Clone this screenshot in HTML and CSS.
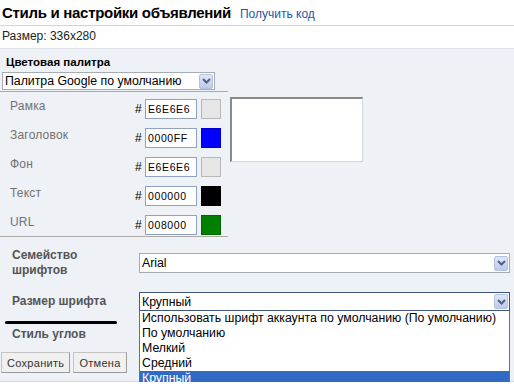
FILE: index.html
```html
<!DOCTYPE html>
<html lang="ru">
<head>
  <meta charset="UTF-8"/>
  <title>Стиль и настройки объявлений</title>
  <link rel="stylesheet" href="styles.css">
</head>
<body>

<div class="header">
  <h1>Стиль и настройки объявлений</h1>
  <a href="#" class="get-code">Получить код</a>
</div>
<div class="size-line">Размер: 336x280</div>

<div class="panel">
  <div class="palette">
    <div class="section-title">Цветовая палитра</div>
    <div class="select palette-select">
      <span>Палитра Google по умолчанию</span>
      <span class="arrow"><svg width="9" height="6" viewBox="0 0 9 6"><path d="M1 1 L4.5 4.5 L8 1" fill="none" stroke="#4d6185" stroke-width="2"/></svg></span>
    </div>
  </div>

  <div class="colors">
    <div class="color-rows">
      <div class="color-row">
        <span class="color-label">Рамка</span><span class="hash">#</span>
        <input class="hex" value="E6E6E6"><span class="swatch" style="background:#E6E6E6"></span>
      </div>
      <div class="color-row">
        <span class="color-label">Заголовок</span><span class="hash">#</span>
        <input class="hex" value="0000FF"><span class="swatch" style="background:#0000FF"></span>
      </div>
      <div class="color-row">
        <span class="color-label">Фон</span><span class="hash">#</span>
        <input class="hex" value="E6E6E6"><span class="swatch" style="background:#E6E6E6"></span>
      </div>
      <div class="color-row">
        <span class="color-label">Текст</span><span class="hash">#</span>
        <input class="hex" value="000000"><span class="swatch" style="background:#000000"></span>
      </div>
      <div class="color-row">
        <span class="color-label">URL</span><span class="hash">#</span>
        <input class="hex" value="008000"><span class="swatch" style="background:#008000"></span>
      </div>
    </div>
    <div class="preview"></div>
  </div>

  <div class="fonts">
    <div class="font-row family-row">
      <div class="font-label">Семейство<br>шрифтов</div>
      <div class="select">
        <span>Arial</span>
        <span class="arrow"><svg width="9" height="6" viewBox="0 0 9 6"><path d="M1 1 L4.5 4.5 L8 1" fill="none" stroke="#4d6185" stroke-width="2"/></svg></span>
      </div>
    </div>
    <div class="font-row size-row">
      <div class="font-label">Размер шрифта</div>
      <div class="select-wrap">
        <div class="select focused">
          <span>Крупный</span>
          <span class="arrow"><svg width="9" height="6" viewBox="0 0 9 6"><path d="M1 1 L4.5 4.5 L8 1" fill="none" stroke="#4d6185" stroke-width="2"/></svg></span>
        </div>
        <ul class="options">
          <li>Использовать шрифт аккаунта по умолчанию (По умолчанию)</li>
          <li>По умолчанию</li>
          <li>Мелкий</li>
          <li>Средний</li>
          <li class="selected">Крупный</li>
        </ul>
      </div>
    </div>
    <div class="marker"></div>
    <div class="font-row corner-row">
      <div class="font-label">Стиль углов</div>
    </div>
  </div>

  <div class="buttons">
    <button class="btn">Сохранить</button>
    <button class="btn">Отмена</button>
  </div>
</div>

</body>
</html>
```

FILE: styles.css
```css
html, body {
  overflow: hidden;
}

body {
  margin: 0;
  font-family: "Liberation Sans", Arial, sans-serif;
  font-size: 12px;
  color: #000;
  background-color: #fff;
}

.header {
  display: flex;
  align-items: baseline;
  gap: 9px;
  height: 25px;
  padding-left: 2px;
  border-bottom: 1px solid #d3d3d3;
}

h1 {
  margin: 0;
  font-size: 15px;
  line-height: 25px;
  font-weight: bold;
  letter-spacing: -0.3px;
}

.get-code {
  color: #2356a8;
  text-decoration: none;
  font-size: 12px;
}

.size-line {
  height: 22px;
  line-height: 21px;
  padding-left: 2px;
  color: #222;
  border-bottom: 1px solid #dde2e9;
}

.panel {
  background-color: #eef1f5;
  padding-bottom: 8px;
  border-bottom: 1px solid #d4d8de;
}

.palette {
  width: 228px;
  padding: 6px 0 1px 0;
  border-bottom: 1px solid #aaa;
}

.section-title {
  font-size: 11.5px;
  font-weight: bold;
  line-height: 14px;
  padding-left: 6px;
  margin-bottom: 3px;
}

.select {
  display: flex;
  align-items: center;
  justify-content: space-between;
  box-sizing: border-box;
  border: 1px solid #a5acb2;
  background-color: #fff;
  font-size: 12.3px;
  padding: 0 1px 0 2px;
}

.palette-select {
  margin-left: 2px;
  width: 213px;
  height: 18px;
}

.arrow {
  display: flex;
  align-items: center;
  justify-content: center;
  box-sizing: border-box;
  width: 14px;
  height: 15px;
  border: 1px solid #b4c2e0;
  border-radius: 2px;
  background: linear-gradient(#e0e7f7, #bccaea);
}

.colors {
  display: flex;
  align-items: flex-start;
}

.color-rows {
  width: 228px;
  box-sizing: border-box;
  padding: 7px 0 1px 10px;
  border-bottom: 1px solid #aaa;
  display: flex;
  flex-direction: column;
  gap: 9px;
}

.color-row {
  display: flex;
  align-items: flex-start;
  height: 20px;
}

.color-label {
  width: 125px;
  color: #727272;
  letter-spacing: 0.2px;
  line-height: 15px;
}

.hash {
  width: 10px;
  line-height: 21px;
}

.hex {
  width: 52px;
  height: 20px;
  box-sizing: border-box;
  margin: 0;
  border: 1px solid #8fa3bd;
  padding: 0 0 0 2px;
  font-family: "Liberation Sans", Arial, sans-serif;
  font-size: 10.5px;
  letter-spacing: 0.6px;
  background-color: #fff;
}

.swatch {
  width: 20px;
  height: 20px;
  box-sizing: border-box;
  margin-left: 4px;
  border: 1px solid rgba(0,0,0,0.2);
}

.preview {
  margin: 5px 0 0 2px;
  width: 133px;
  height: 65px;
  box-sizing: border-box;
  background-color: #fff;
  border-top: 2px solid #8a8a8a;
  border-left: 2px solid #8a8a8a;
  border-right: 1px solid #d6dae0;
  border-bottom: 1px solid #d6dae0;
}

.fonts {
  padding-top: 10px;
}

.font-row {
  display: flex;
  align-items: center;
}

.font-label {
  width: 127px;
  padding-left: 12px;
  font-weight: bold;
  color: #555;
  line-height: 15px;
}

.family-row {
  height: 32px;
}

.family-row .select {
  width: 371px;
  height: 20px;
}

.size-row {
  margin-top: 13px;
  height: 19px;
}

.select-wrap {
  position: relative;
  width: 371px;
}

.select.focused {
  height: 19px;
  border-color: #3f5680;
}

.options {
  position: absolute;
  top: 100%;
  left: 0;
  right: 0;
  margin: 0;
  padding: 0;
  list-style: none;
  background-color: #fff;
  border: 1px solid #6f6f6f;
  border-top: none;
  font-size: 12.3px;
  z-index: 2;
}

.options li {
  height: 15px;
  line-height: 15px;
  padding-left: 2px;
  white-space: nowrap;
}

.options li.selected {
  background-color: #316ac5;
  color: #fff;
}

.marker {
  margin: 10px 0 0 5px;
  width: 112px;
  height: 3px;
  border-radius: 2px;
  background-color: #000;
}

.corner-row {
  margin-top: 3px;
}

.buttons {
  display: flex;
  gap: 3px;
  margin-top: 10px;
  padding-left: 1px;
}

.btn {
  height: 21px;
  padding: 0 5px;
  font-family: "Liberation Sans", Arial, sans-serif;
  font-size: 11px;
  letter-spacing: 0.3px;
  color: #333;
  background-color: #f0f0f0;
  border: 1px solid #c4c4c4;
  border-right-color: #9a9a9a;
  border-bottom-color: #9a9a9a;
  cursor: pointer;
}
```
